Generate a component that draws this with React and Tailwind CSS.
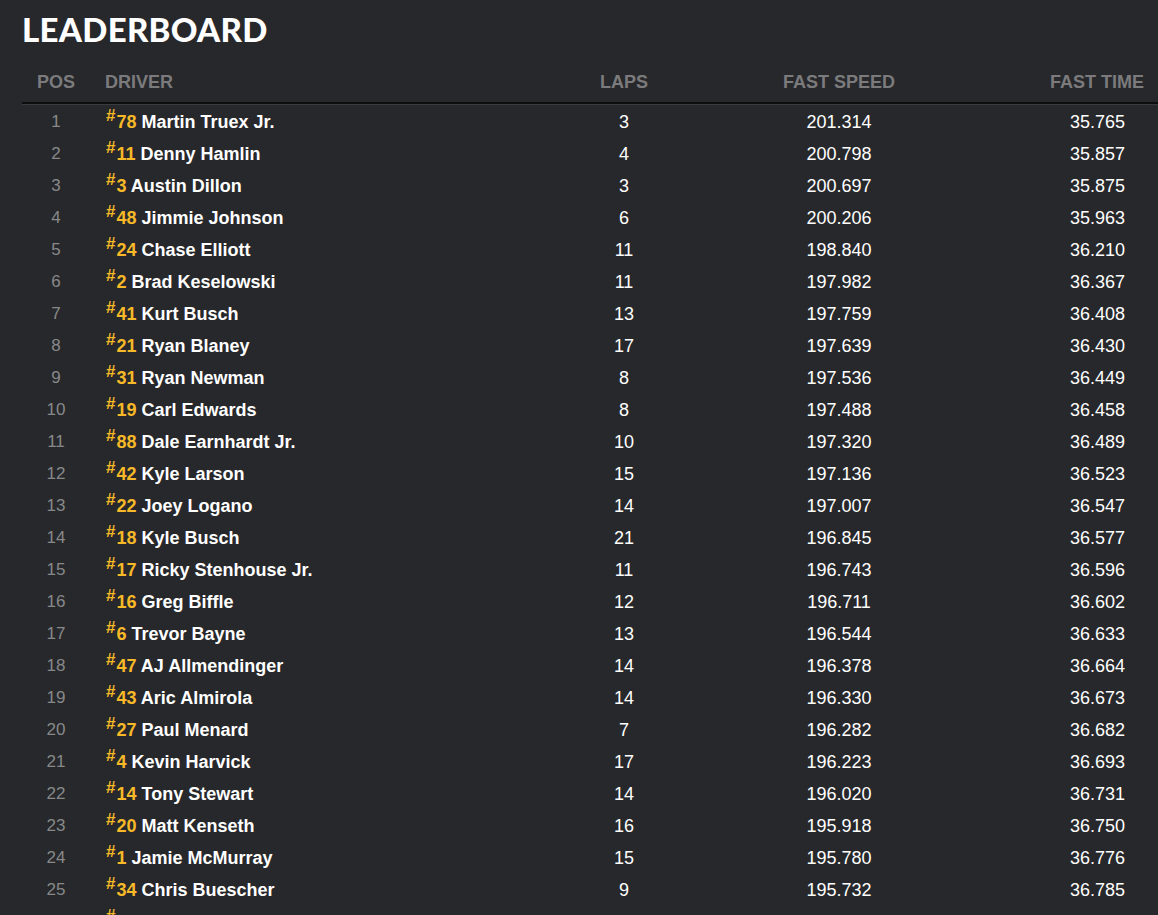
import React from "react";

const drivers = [
  ["78", "Martin Truex Jr.", 3, "201.314", "35.765"],
  ["11", "Denny Hamlin", 4, "200.798", "35.857"],
  ["3", "Austin Dillon", 3, "200.697", "35.875"],
  ["48", "Jimmie Johnson", 6, "200.206", "35.963"],
  ["24", "Chase Elliott", 11, "198.840", "36.210"],
  ["2", "Brad Keselowski", 11, "197.982", "36.367"],
  ["41", "Kurt Busch", 13, "197.759", "36.408"],
  ["21", "Ryan Blaney", 17, "197.639", "36.430"],
  ["31", "Ryan Newman", 8, "197.536", "36.449"],
  ["19", "Carl Edwards", 8, "197.488", "36.458"],
  ["88", "Dale Earnhardt Jr.", 10, "197.320", "36.489"],
  ["42", "Kyle Larson", 15, "197.136", "36.523"],
  ["22", "Joey Logano", 14, "197.007", "36.547"],
  ["18", "Kyle Busch", 21, "196.845", "36.577"],
  ["17", "Ricky Stenhouse Jr.", 11, "196.743", "36.596"],
  ["16", "Greg Biffle", 12, "196.711", "36.602"],
  ["6", "Trevor Bayne", 13, "196.544", "36.633"],
  ["47", "AJ Allmendinger", 14, "196.378", "36.664"],
  ["43", "Aric Almirola", 14, "196.330", "36.673"],
  ["27", "Paul Menard", 7, "196.282", "36.682"],
  ["4", "Kevin Harvick", 17, "196.223", "36.693"],
  ["14", "Tony Stewart", 14, "196.020", "36.731"],
  ["20", "Matt Kenseth", 16, "195.918", "36.750"],
  ["1", "Jamie McMurray", 15, "195.780", "36.776"],
  ["34", "Chris Buescher", 9, "195.732", "36.785"],
  ["5", "Kasey Kahne", 12, "195.714", "36.788"],
];

const cols = "grid grid-cols-[68px_470px_128px_302px_1fr]";

export default function App() {
  return (
    <div className="min-h-screen bg-[#27282b] pl-[22px] font-['Liberation_Sans',Arial,sans-serif] text-white">
      <h1 className="pt-[13px] font-['Lato',sans-serif] text-[33px] leading-[33px] font-black tracking-[0.3px] text-white">
        LEADERBOARD
      </h1>

      <div className="mt-[17px]">
        {/* header */}
        <div className={`${cols} h-[41px] items-center border-b-2 border-[#0d0d0e] text-[18px] font-bold text-[#7b7b7d]`}>
          <div className="text-center">POS</div>
          <div className="pl-[15px]">DRIVER</div>
          <div className="text-center">LAPS</div>
          <div className="text-center">FAST SPEED</div>
          <div className="pr-[14px] text-right">FAST TIME</div>
        </div>
        <div className="h-px bg-[#3a3b3e]" />

        <div className="pt-[1px]">
          {drivers.map(([num, name, laps, speed, time], i) => (
            <div key={num} className={`${cols} h-[32px] items-center text-[18px]`}>
              <div className="text-center text-[17px] text-[#88888a]">{i + 1}</div>
              <div className="pl-[16px] font-bold whitespace-nowrap">
                <span className="relative -top-[7px] mr-px text-[17px] text-[#f7b928]">#</span>
                <span className="text-[#f7b928]">{num}</span>{" "}
                <span className="text-white">{name}</span>
              </div>
              <div className="text-center">{laps}</div>
              <div className="text-center">{speed}</div>
              <div className="pr-[33px] text-right">{time}</div>
            </div>
          ))}
        </div>
      </div>
    </div>
  );
}
